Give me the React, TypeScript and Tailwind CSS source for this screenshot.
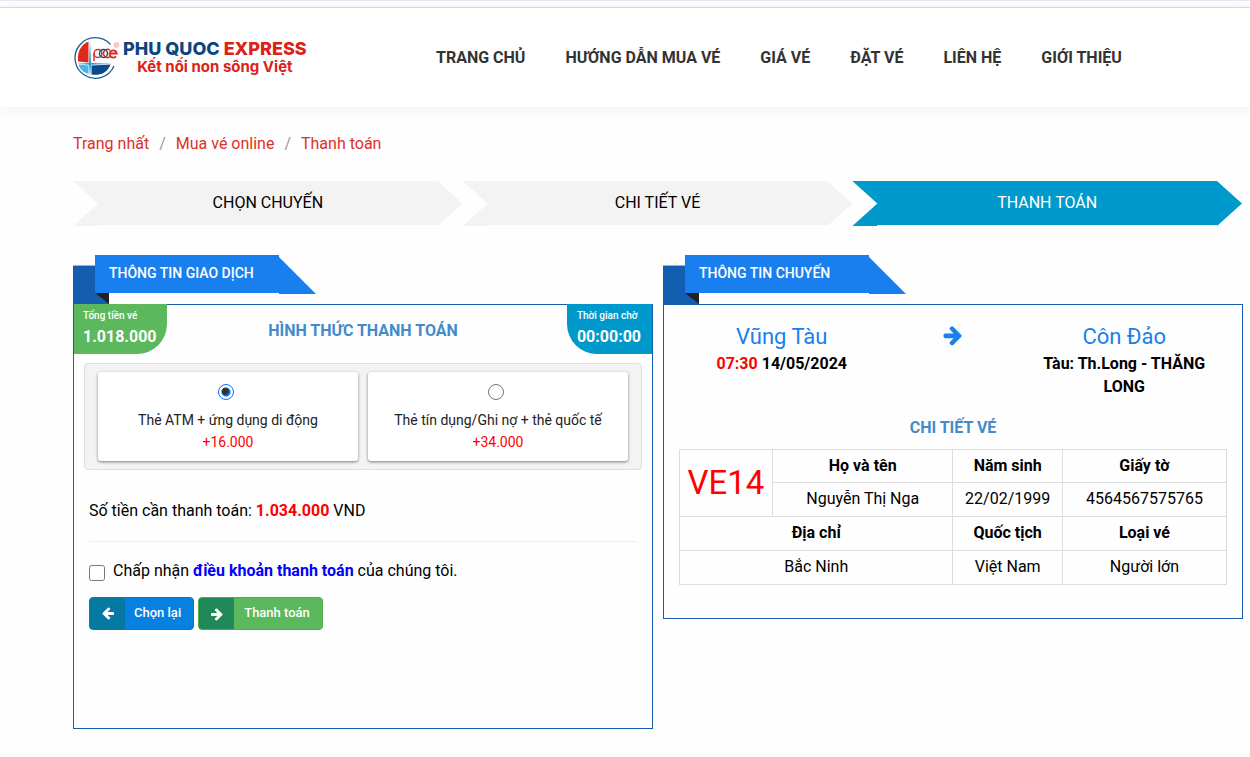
import { useState } from "react";
import type { ReactNode } from "react";

const NAV_ITEMS = ["TRANG CHỦ", "HƯỚNG DẪN MUA VÉ", "GIÁ VÉ", "ĐẶT VÉ", "LIÊN HỆ", "GIỚI THIỆU"];
const BREADCRUMBS = ["Trang nhất", "Mua vé online", "Thanh toán"];
const STEPS = ["CHỌN CHUYẾN", "CHI TIẾT VÉ", "THANH TOÁN"];
const CURRENT_STEP = 2;

const METHODS = [
  { id: "atm", label: "Thẻ ATM + ứng dụng di động", fee: "+16.000", total: "1.034.000" },
  { id: "credit", label: "Thẻ tín dụng/Ghi nợ + thẻ quốc tế", fee: "+34.000", total: "1.052.000" },
];

function LogoMark() {
  return (
    <svg viewBox="0 0 48 44" className="w-12 h-11 shrink-0" aria-hidden="true">
      <path d="M37.500 8.500A20.300 20.300 0 1 0 41 30" fill="none" stroke="#1d5c97" strokeWidth="1.3" />
      <path d="M15.500 5.500V26.500L5 25.500C4 16 8 8.500 15.500 5.500Z" fill="#dc2a1c" />
      <path d="M5.500 28.500L15.500 29.500V38C10.500 36.500 7 33.500 5.500 28.500Z" fill="#4bb4e6" />
      <path d="M18.500 29.500L37.500 28.500C35 36 28 40 18.500 38.500Z" fill="#0d4a8b" />
      <path d="M17 3.500L18 27L39 27.700L18 28.800L17 41L16 28.800L4 27.700L16 27Z" fill="#2b9bd8" />
      <g fill="none" strokeWidth="1.5">
        <path d="M21 25V17.500" stroke="#dc2a1c" />
        <circle cx="25" cy="17.500" r="4" stroke="#dc2a1c" />
        <circle cx="30.500" cy="17.500" r="4" stroke="#0d4a8b" />
        <path d="M37 14.300A4 4 0 1 0 37 20.700" stroke="#dc2a1c" />
        <path d="M37 17.500H43.800A3.600 3.600 0 1 0 43 20.300" stroke="#dc2a1c" strokeWidth="1.8" />
      </g>
      <circle cx="43.500" cy="9" r="2.300" fill="none" stroke="#e58a82" strokeWidth="0.7" />
      <path d="M42.800 10.300V7.800H43.700A0.700 0.700 0 0 1 43.700 9.200H42.800L44.300 10.300" fill="none" stroke="#e58a82" strokeWidth="0.5" />
    </svg>
  );
}

function Logo() {
  return (
    <a href="#" className="flex items-center w-[240px] font-[Inter,sans-serif] whitespace-nowrap">
      <LogoMark />
      <span className="flex flex-col items-center pl-[2px]">
        <span className="text-lg leading-[18px] font-extrabold text-[#0d4480]">
          PHU QUOC <span className="text-[#dc2117]">EXPRESS</span>
        </span>
        <span className="text-[15px] leading-[18px] font-bold text-[#dc2117]">Kết nối non sông Việt</span>
      </span>
    </a>
  );
}

function ArrowIcon({ className }: { className: string }) {
  return (
    <svg viewBox="0 0 1792 1792" fill="currentColor" className={className} aria-hidden="true">
      <path d="M1600 960q0 54-37 91l-651 651q-39 37-91 37-51 0-90-37l-75-75q-38-38-38-91t38-91l293-293h-704q-52 0-84.500-37.500t-32.500-90.500v-128q0-53 32.500-90.500t84.500-37.500h704l-293-294q-38-36-38-90t38-90l75-75q38-38 90-38 53 0 91 38l651 651q37 35 37 90z" />
    </svg>
  );
}

function Ribbon({ title }: { title: string }) {
  return (
    <div className="relative h-[49px] pl-[22px]">
      <div className="absolute left-0 bottom-0 w-9 h-[39px] border-t border-[#8fb2db] bg-[#145eb0]" />
      <div className="absolute left-[22px] bottom-0 w-[14px] h-[11px] bg-[#222] [clip-path:polygon(0_0,100%_0,100%_100%)]" />
      <h2 className="relative w-[221px] h-[39px] pl-[14px] bg-[#1a7fee] text-sm leading-9 font-medium text-white [clip-path:polygon(0_0,184px_0,184px_2px,100%_100%,184px_100%,184px_38px,0_38px)]">
        {title}
      </h2>
    </div>
  );
}

function Panel({ title, className, children }: { title: string; className: string; children: ReactNode }) {
  return (
    <section className="flex-1 min-w-0">
      <Ribbon title={title} />
      <div className={`border border-[#145eb0] ${className}`}>{children}</div>
    </section>
  );
}

function TransactionPanel() {
  const [method, setMethod] = useState("atm");
  const [accepted, setAccepted] = useState(false);
  const selected = METHODS.find((m) => m.id === method) ?? METHODS[0];

  return (
    <Panel title="THÔNG TIN GIAO DỊCH" className="min-h-[425px]">
      <div className="grid grid-cols-[1fr_auto_1fr] items-start -mt-px">
        <div className="justify-self-start h-[50px] pl-[9px] pr-[10px] pt-1 rounded-br-[30px] bg-[#5cb85c] text-white">
          <div className="text-[10px] leading-4 font-medium">Tổng tiền vé</div>
          <div className="text-base leading-[26px] font-bold">1.018.000</div>
        </div>
        <h3 className="pt-[15px] text-base leading-6 font-bold text-[#428bca]">HÌNH THỨC THANH TOÁN</h3>
        <div className="justify-self-end h-[50px] pl-[10px] pr-[11px] pt-1 rounded-bl-[30px] bg-[#0099cc] text-white">
          <div className="text-[10px] leading-4 font-medium">Thời gian chờ</div>
          <div className="text-base leading-[26px] font-bold">00:00:00</div>
        </div>
      </div>

      <div className="flex gap-[10px] mt-[9px] mx-[10px] px-[13px] py-2 border border-[#ddd] rounded bg-[#f3f3f3]">
        {METHODS.map((m) => (
          <label
            key={m.id}
            className="flex-1 flex flex-col items-center h-[89px] pt-3 rounded-[3px] bg-white text-sm leading-[22px] text-[#222] shadow-[0_1px_3px_rgba(0,0,0,0.5)]"
          >
            <input
              type="radio"
              name="method"
              checked={method === m.id}
              onChange={() => setMethod(m.id)}
              className="appearance-none size-4 mr-1 mb-[9px] rounded-full border border-[#767676] checked:border-[#0075ff] checked:bg-[radial-gradient(circle_at_45%_45%,#333_3px,transparent_4px),radial-gradient(circle,#0075ff_4px,transparent_5px)]"
            />
            <span>{m.label}</span>
            <span className="text-[#ff0000]">{m.fee}</span>
          </label>
        ))}
      </div>

      <div className="px-[15px] pt-[29px] text-base leading-6">
        <p>
          Số tiền cần thanh toán: <strong className="font-bold text-[#ff0000]">{selected.total}</strong> VND
        </p>
        <hr className="mt-[18px] border-[#eee]" />
        <div className="flex mt-[17px]">
          <input
            id="terms"
            type="checkbox"
            checked={accepted}
            onChange={(e) => setAccepted(e.target.checked)}
            className="size-4 mt-[6px] mr-2"
          />
          <label htmlFor="terms">
            Chấp nhận{" "}
            <a href="#" className="font-bold text-[#0000ff]">
              điều khoản thanh toán
            </a>{" "}
            của chúng tôi.
          </label>
        </div>
        <div className="flex gap-1 mt-[14px] text-[13px] leading-[30px] font-medium text-white">
          <button className="flex items-center border border-[#0577c9] rounded-[4px] bg-[#0681e2] overflow-hidden">
            <span className="flex items-center justify-center w-[35px] h-[31px] bg-[#0679a3]">
              <ArrowIcon className="size-[14px] rotate-180" />
            </span>
            <span className="pl-[9px] pr-3 pb-px">Chọn lại</span>
          </button>
          <button className="flex items-center border border-[#4cae4c] rounded-[4px] bg-[#5cb85c] overflow-hidden">
            <span className="flex items-center justify-center w-[35px] h-[31px] bg-[#1f8a57]">
              <ArrowIcon className="size-[14px]" />
            </span>
            <span className="pl-[10px] pr-3 pb-px">Thanh toán</span>
          </button>
        </div>
      </div>
    </Panel>
  );
}

function TripPanel() {
  const cell = "h-[34px] pb-[2px] border border-[#ddd] font-normal";
  const head = "h-[34px] pb-[2px] border border-[#ddd] font-bold";
  const topHead = "h-[33px] border border-[#ddd] font-bold";

  return (
    <Panel title="THÔNG TIN CHUYẾN" className="px-[15px] pt-[18px] pb-[33px]">
      <div className="grid grid-cols-[3fr_2fr_3fr] text-center text-base leading-[23px] font-bold">
        <div>
          <div className="mb-px text-[22px] leading-7 font-normal text-[#1a7fee]">Vũng Tàu</div>
          <span className="text-[#ff0000]">07:30</span> 14/05/2024
        </div>
        <div className="flex justify-center pt-px text-[#1a7fee]">
          <ArrowIcon className="size-[22px]" />
        </div>
        <div>
          <div className="mb-px text-[22px] leading-7 font-normal text-[#1a7fee]">Côn Đảo</div>
          Tàu: Th.Long - THĂNG LONG
        </div>
      </div>

      <h3 className="mt-[18px] mb-[9px] text-center text-base leading-6 font-bold text-[#428bca]">CHI TIẾT VÉ</h3>

      <table className="w-full table-fixed border-collapse text-center text-base leading-6">
        <colgroup>
          <col className="w-[17%]" />
          <col className="w-[33%]" />
          <col className="w-[20%]" />
          <col className="w-[30%]" />
        </colgroup>
        <tbody>
          <tr>
            <td rowSpan={2} className="border border-[#ddd] text-[33px] text-[#ff0000]">
              VE14
            </td>
            <th className={topHead}>Họ và tên</th>
            <th className={topHead}>Năm sinh</th>
            <th className={topHead}>Giấy tờ</th>
          </tr>
          <tr>
            <td className={cell}>Nguyễn Thị Nga</td>
            <td className={cell}>22/02/1999</td>
            <td className={cell}>4564567575765</td>
          </tr>
          <tr>
            <th colSpan={2} className={head}>Địa chỉ</th>
            <th className={head}>Quốc tịch</th>
            <th className={head}>Loại vé</th>
          </tr>
          <tr>
            <td colSpan={2} className={cell}>Bắc Ninh</td>
            <td className={cell}>Việt Nam</td>
            <td className={cell}>Người lớn</td>
          </tr>
        </tbody>
      </table>
    </Panel>
  );
}

export default function App() {
  return (
    <div className="min-h-screen bg-[#fefefe] font-[Roboto,sans-serif] text-black">
      <div className="h-2 border-t border-b border-t-[#e6eaf6] border-b-[#ddd] bg-white" />
      <header className="flex items-center h-[99px] pl-[73px] pr-[7px] bg-white shadow-[0_0_14px_rgba(0,0,0,0.08)]">
        <Logo />
        <nav className="flex gap-10 ml-[123px] text-base font-bold text-[#333] whitespace-nowrap">
          {NAV_ITEMS.map((item) => (
            <a key={item} href="#">
              {item}
            </a>
          ))}
        </nav>
      </header>

      <main className="pl-[73px] pr-[7px] pt-[25px] pb-7">
        <ol className="flex text-base leading-6 text-[#dd3128]">
          {BREADCRUMBS.map((crumb, i) => (
            <li key={crumb}>
              {i > 0 && <span className="px-[10px] text-[#999]">/</span>}
              <a href="#">{crumb}</a>
            </li>
          ))}
        </ol>

        <ol className="grid grid-cols-3 mt-[25px] mr-px text-center text-base leading-[43px]">
          {STEPS.map((step, i) => (
            <li
              key={step}
              className={`h-[45px] [clip-path:polygon(0_0,calc(100%_-_25px)_0,100%_50%,calc(100%_-_25px)_100%,calc(100%_-_25px)_44px,25px_44px,25px_100%,0_100%,25px_50%)] ${
                i === CURRENT_STEP ? "bg-[#0099cc] text-white" : "bg-[#f3f3f3]"
              }`}
            >
              {step}
            </li>
          ))}
        </ol>

        <div className="flex items-start gap-[10px] mt-[29px]">
          <TransactionPanel />
          <TripPanel />
        </div>
      </main>
    </div>
  );
}
